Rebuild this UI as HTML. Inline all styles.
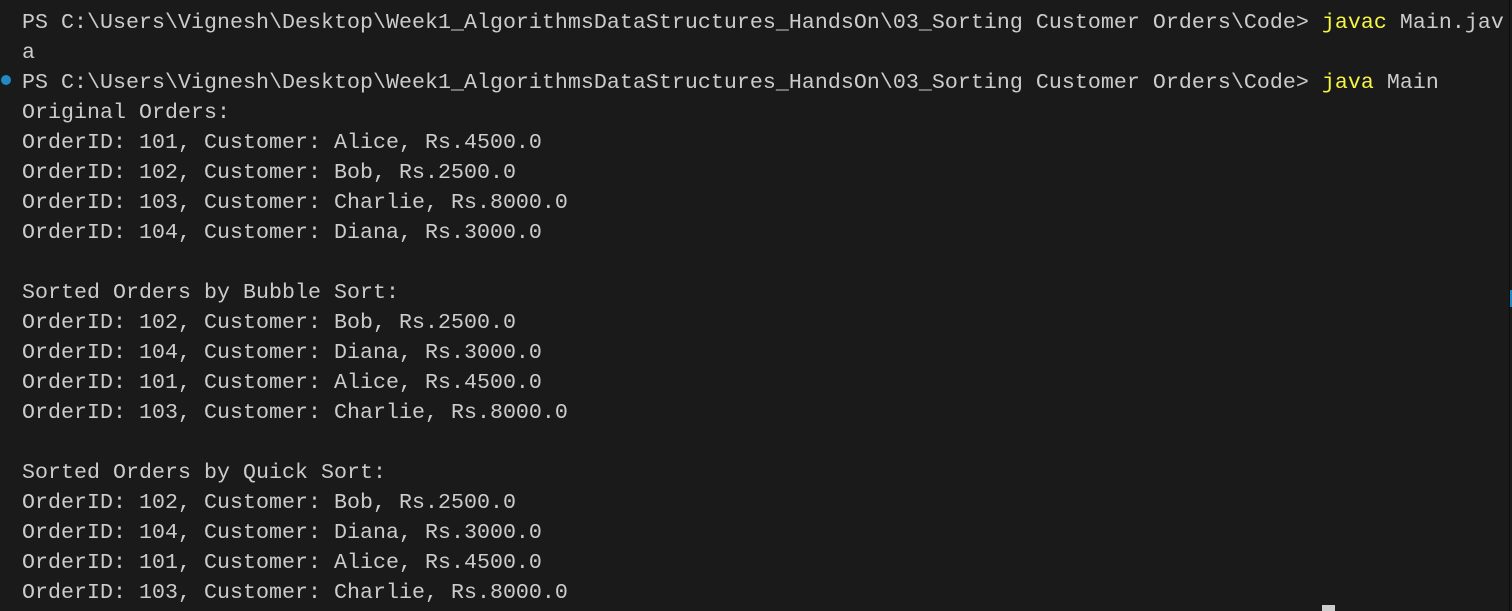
<!DOCTYPE html>
<html><head><meta charset="utf-8"><style>
html,body{margin:0;padding:0;background:#1a1a1a;width:1512px;height:611px;overflow:hidden;}
pre{position:absolute;left:22px;top:8px;margin:0;font-family:"Liberation Mono",monospace;font-size:21.6px;letter-spacing:0.04px;line-height:30px;color:#cccccc;white-space:pre;}
.y{color:#f5f543;}
.dot{position:absolute;left:1px;top:75px;width:10px;height:10px;border-radius:50%;background:#1f8ac4;}
.bar{position:absolute;left:1509px;top:0;width:1px;height:611px;background:#0d0d0d;}
.mark{position:absolute;left:1510px;top:290px;width:2px;height:17px;background:#1f8ac4;}
.cur{position:absolute;left:1322px;top:605px;width:13px;height:6px;background:#cccccc;}
</style></head><body>
<div class="dot"></div>
<pre>PS C:\Users\Vignesh\Desktop\Week1_AlgorithmsDataStructures_HandsOn\03_Sorting Customer Orders\Code&gt; <span class="y">javac</span> Main.jav
a
PS C:\Users\Vignesh\Desktop\Week1_AlgorithmsDataStructures_HandsOn\03_Sorting Customer Orders\Code&gt; <span class="y">java</span> Main
Original Orders:
OrderID: 101, Customer: Alice, Rs.4500.0
OrderID: 102, Customer: Bob, Rs.2500.0
OrderID: 103, Customer: Charlie, Rs.8000.0
OrderID: 104, Customer: Diana, Rs.3000.0

Sorted Orders by Bubble Sort:
OrderID: 102, Customer: Bob, Rs.2500.0
OrderID: 104, Customer: Diana, Rs.3000.0
OrderID: 101, Customer: Alice, Rs.4500.0
OrderID: 103, Customer: Charlie, Rs.8000.0

Sorted Orders by Quick Sort:
OrderID: 102, Customer: Bob, Rs.2500.0
OrderID: 104, Customer: Diana, Rs.3000.0
OrderID: 101, Customer: Alice, Rs.4500.0
OrderID: 103, Customer: Charlie, Rs.8000.0</pre>
<div class="bar"></div>
<div class="mark"></div>
<div class="cur"></div>
</body></html>
